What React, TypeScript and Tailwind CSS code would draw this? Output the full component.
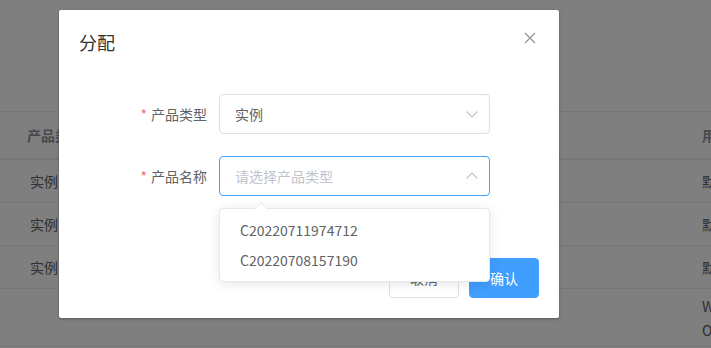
import React from 'react';

const rows = ['实例', '实例', '实例'];

function Chevron({ up }: { up?: boolean }) {
  return (
    <svg width="14" height="14" viewBox="0 0 14 14" className="shrink-0">
      <path
        d={up ? 'M1.5 9.5 L7 4 L12.5 9.5' : 'M1.5 4.5 L7 10 L12.5 4.5'}
        fill="none"
        stroke="#c0c4cc"
        strokeWidth="1.1"
      />
    </svg>
  );
}

function FormItem({ label, children }: { label: string; children: React.ReactNode }) {
  return (
    <div className="mb-[22px] flex items-center">
      <label className="w-[140px] pr-3 text-right text-[14px] text-[#606266]">
        <span className="mr-1 text-[#f56c6c]">*</span>
        {label}
      </label>
      {children}
    </div>
  );
}

export default function App() {
  return (
    <div
      className="relative w-[711px] h-[348px] overflow-hidden bg-white"
      style={{ fontFamily: '"Noto Sans CJK SC", "Noto Sans", sans-serif' }}
    >
      {/* page behind the dialog */}
      <div className="pt-[111px]">
        <div className="flex h-[49px] items-center border-t border-b-2 border-[#ebeef5] text-[14px] font-bold text-[#909399] whitespace-nowrap">
          <div className="w-[702px] shrink-0 pl-[27px]">产品类型</div>
          <div>用户</div>
        </div>
        {rows.map((r, i) => (
          <div
            key={i}
            className="flex h-[43px] items-center border-b border-[#ebeef5] text-[14px] text-[#606266] whitespace-nowrap"
          >
            <div className="w-[702px] shrink-0 pl-[30px]">{r}</div>
            <div>默认</div>
          </div>
        ))}
        <div className="flex h-[58px] border-b border-[#ebeef5] text-[14px] text-[#606266] whitespace-nowrap">
          <div className="w-[702px] shrink-0" />
          <div className="flex flex-col justify-center gap-[6px] leading-[18px]">
            <div>Win</div>
            <div>Ok</div>
          </div>
        </div>
      </div>

      <div className="absolute inset-0 bg-black/50" />

      {/* dialog */}
      <div className="absolute left-[59px] top-[10px] w-[500px] rounded-[2px] bg-white shadow-[0_1px_3px_rgba(0,0,0,0.3)]">
        <div className="relative px-5 pt-5 pb-[10px]">
          <div className="text-[18px] leading-6 text-[#303133]">分配</div>
          <svg width="12" height="12" viewBox="0 0 12 12" className="absolute right-[23px] top-[22px]">
            <path d="M1 1 L11 11 M11 1 L1 11" stroke="#909399" strokeWidth="1.2" fill="none" />
          </svg>
        </div>

        <div className="flex flex-col px-5 py-[30px]">
          <FormItem label="产品类型">
            <div className="flex h-10 w-[271px] items-center justify-between rounded-[4px] border border-[#dcdfe6] pl-[15px] pr-[10px] text-[14px] text-[#606266]">
              <span>实例</span>
              <Chevron />
            </div>
          </FormItem>
          <FormItem label="产品名称">
            <div className="relative">
              <div className="flex h-10 w-[271px] items-center justify-between rounded-[4px] border border-[#409eff] pl-[15px] pr-[10px] text-[14px] text-[#c0c4cc]">
                <span>请选择产品类型</span>
                <Chevron up />
              </div>
              <div className="absolute left-0 top-[52px] z-10 w-[271px] rounded-[4px] border border-[#e4e7ed] bg-white py-[6px] shadow-[0_2px_12px_rgba(0,0,0,0.1)]">
                <svg width="14" height="8" viewBox="0 0 14 8" className="absolute left-[34px] top-[-7px]">
                  <path d="M0 7.5 L7 0.5 L14 7.5" fill="#ffffff" stroke="#e4e7ed" strokeWidth="1" />
                </svg>
                <div className="flex h-[30px] items-center px-5 text-[14px] text-[#606266]">C20220711974712</div>
                <div className="flex h-[30px] items-center px-5 text-[14px] text-[#606266]">C20220708157190</div>
              </div>
            </div>
          </FormItem>
        </div>

        <div className="flex justify-end gap-[10px] px-5 pt-[10px] pb-5">
          <button className="h-10 rounded-[4px] border border-[#dcdfe6] bg-white px-5 text-[14px] text-[#606266]">
            取消
          </button>
          <button className="h-10 rounded-[4px] border border-[#409eff] bg-[#409eff] px-5 text-[14px] text-white">
            确认
          </button>
        </div>
      </div>
    </div>
  );
}
